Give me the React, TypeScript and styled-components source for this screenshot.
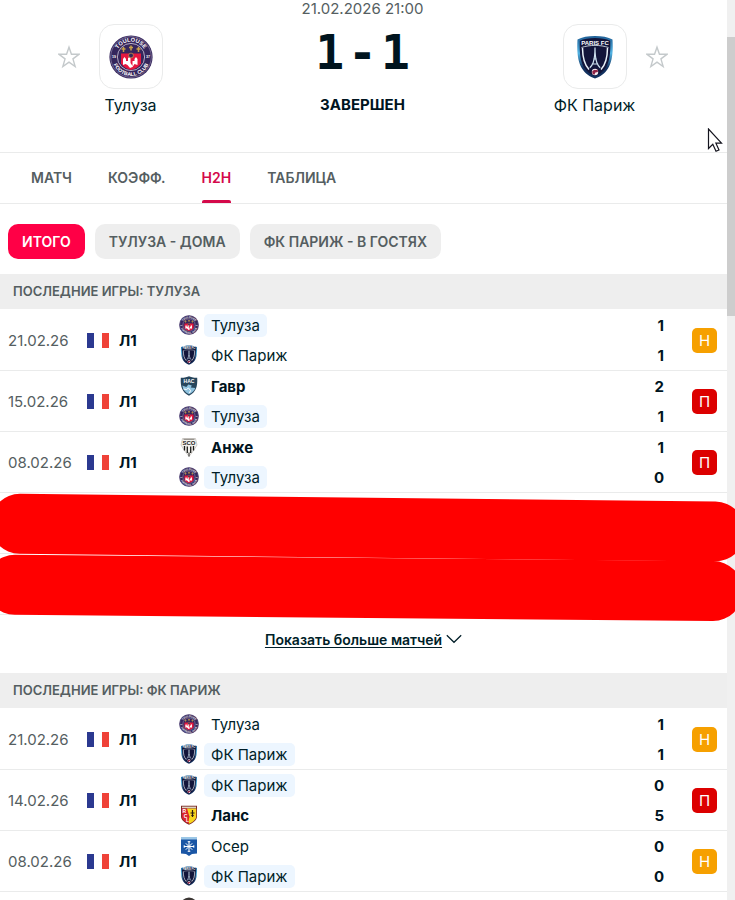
import { useId, useState } from "react";
import styled, { createGlobalStyle, css } from "styled-components";

const colors = {
  text: "#001e28",
  strong: "#00141e",
  muted: "#555e61",
  line: "#eaebeb",
  panel: "#eeeeee",
  brand: "#ff0046",
  active: "#d4094a",
  highlight: "#edf6ff",
  draw: "#f6a000",
  loss: "#dc0000",
};

const GlobalStyle = createGlobalStyle`
  * {
    box-sizing: border-box;
  }
  body {
    margin: 0;
    background: #fff;
    color: ${colors.text};
    font-family: Inter, "Liberation Sans", sans-serif;
  }
  button {
    font-family: inherit;
    border: 0;
    padding: 0;
    background: none;
    cursor: pointer;
  }
`;

const Page = styled.div`
  position: relative;
  display: flex;
  height: 100vh;
  overflow: hidden;
`;

const Main = styled.main`
  flex: 1;
  min-width: 0;
`;

const ScrollTrack = styled.div`
  flex: none;
  width: 8px;
  background: #f0f0f0;
`;

const ScrollThumb = styled.div`
  height: 31%;
  margin-top: 37px;
  background: #cdcdcd;
`;

const Duel = styled.header`
  display: grid;
  grid-template-columns: repeat(3, 32%);
  justify-content: center;
  height: 153px;
  padding-right: 2px;
  border-bottom: 1px solid ${colors.line};
`;

const Participant = styled.div`
  display: grid;
  grid-template-columns: 1fr 64px 1fr;
  grid-template-rows: 65px 32px;
  align-items: center;
  padding-top: 24px;
  align-content: start;
`;

const CrestFrame = styled.div`
  grid-column: 2;
  grid-row: 1;
  display: flex;
  align-items: center;
  justify-content: center;
  height: 65px;
  border: 1px solid ${colors.line};
  border-radius: 15px;
`;

const Favorite = styled.button<{ $side: "left" | "right" }>`
  grid-row: 1;
  grid-column: ${({ $side }) => ($side === "left" ? 1 : 3)};
  justify-self: ${({ $side }) => ($side === "left" ? "end" : "start")};
  margin: 0 19px;
  height: 24px;
`;

const ParticipantName = styled.a`
  grid-column: 1 / -1;
  text-align: center;
  font-size: 16px;
  line-height: 32px;
  color: inherit;
  text-decoration: none;
`;

const DuelCenter = styled.div`
  display: flex;
  flex-direction: column;
  align-items: center;
`;

const StartTime = styled.div`
  font-size: 15px;
  line-height: 18px;
  color: ${colors.muted};
`;

const Score = styled.div`
  display: flex;
  gap: 4px;
  margin-top: 6px;
  font-family: "DejaVu Sans Mono", monospace;
  font-size: 48px;
  font-weight: 700;
  line-height: 56px;
  color: ${colors.strong};
`;

const Status = styled.div`
  margin-top: 15px;
  font-size: 15px;
  font-weight: 700;
  line-height: 20px;
  color: ${colors.strong};
`;

const Tabs = styled.nav`
  display: flex;
  gap: 36px;
  height: 51px;
  padding: 0 31px;
  border-bottom: 1px solid ${colors.line};
`;

const Tab = styled.a<{ $active: boolean }>`
  display: flex;
  align-items: center;
  border-top: 3px solid transparent;
  font-size: 14px;
  font-weight: 600;
  line-height: 20px;
  color: ${colors.muted};
  text-decoration: none;
  position: relative;
  padding-bottom: 3px;

  ${({ $active }) =>
    $active &&
    css`
      color: ${colors.active};

      &::after {
        content: "";
        position: absolute;
        left: 0;
        right: 0;
        bottom: 0;
        height: 3px;
        border-radius: 2px 2px 0 0;
        background: ${colors.active};
      }
    `}
`;

const Filters = styled.div`
  display: flex;
  gap: 10px;
  padding: 20px 8px 15px;
`;

const Filter = styled.button<{ $active: boolean }>`
  height: 35px;
  padding: 0 14px;
  border-radius: 10px;
  font-size: 14px;
  font-weight: 600;
  white-space: nowrap;
  color: ${({ $active }) => ($active ? "#fff" : colors.muted)};
  background: ${({ $active }) => ($active ? colors.brand : colors.panel)};
`;

const Section = styled.section`
  position: relative;
`;

const SectionTitle = styled.h2`
  margin: 0 0 1px;
  padding: 0 13px;
  font-size: 13px;
  font-weight: 600;
  line-height: 35px;
  color: ${colors.muted};
  background: ${colors.panel};
`;

const MatchTable = styled.table`
  width: 100%;
  table-layout: fixed;
  border-spacing: 0;

  td {
    height: 61px;
    padding: 0;
    border-bottom: 1px solid ${colors.line};
  }
`;

const DateCell = styled.td`
  width: 87px;
  font-size: 15px;
  color: ${colors.muted};

  && {
    padding-left: 8px;
  }
`;

const LeagueCell = styled.td`
  width: 92px;
`;

const League = styled.div`
  display: flex;
  align-items: center;
  gap: 10px;
  font-size: 15px;
  font-weight: 700;
  color: ${colors.strong};
`;

const ScoreCell = styled.td`
  width: 60px;
`;

const BadgeCell = styled.td`
  width: 35px;
`;

const TeamLine = styled.div`
  display: flex;
  align-items: center;
  gap: 5px;
  height: 30px;
`;

const TeamName = styled.span<{ $highlight?: boolean; $winner?: boolean }>`
  padding: 0 7px;
  border-radius: 5px;
  font-size: 15px;
  line-height: 23px;
  font-weight: ${({ $winner }) => ($winner ? 700 : 400)};
  color: ${({ $winner }) => ($winner ? colors.strong : colors.text)};
  background: ${({ $highlight }) =>
    $highlight ? colors.highlight : "transparent"};
`;

const Goals = styled.div`
  display: flex;
  align-items: center;
  justify-content: flex-end;
  height: 30px;
  padding-right: 28px;
  font-size: 15px;
  font-weight: 700;
  line-height: 23px;
  color: ${colors.strong};
`;

const Badge = styled.span<{ $loss: boolean }>`
  display: block;
  width: 25px;
  border-radius: 5px;
  text-align: center;
  font-size: 15px;
  line-height: 25px;
  color: #fff;
  background: ${({ $loss }) => ($loss ? colors.loss : colors.draw)};
`;

const MoreBar = styled.div`
  display: flex;
  justify-content: center;
  height: 58px;
  padding-bottom: 10px;
`;

const MoreButton = styled.button`
  display: flex;
  align-items: center;
  gap: 4px;
  font-size: 14px;
  font-weight: 600;
  color: ${colors.text};

  span {
    text-decoration: underline;
    text-underline-offset: 2px;
  }
`;

// Spills over the scroll track, so it is wider than the list below it
const Marker = styled.svg`
  position: absolute;
  left: 0;
  top: 218px;
  z-index: 1;
  width: calc(100% + 8px);
  height: 132px;
`;

const Pointer = styled.svg`
  position: absolute;
  right: 12px;
  top: 128px;
`;

type CrestProps = { size: number };

const ToulouseCrest = ({ size }: CrestProps) => {
  const id = useId();
  return (
    <svg width={size} height={size} viewBox="0 0 44 44" aria-hidden="true">
      <circle cx="22" cy="22" r="21.6" fill="#35265c" />
      <circle cx="22" cy="22" r="20.3" fill="none" stroke="#8d83a6" strokeWidth=".7" />
      <circle cx="22" cy="22" r="13.6" fill="#35265c" stroke="#b3abc4" strokeWidth="1" />
      <path id={`${id}t`} d="M6.7 22a15.3 15.3 0 0 1 30.6 0" fill="none" />
      <path id={`${id}b`} d="M3 22a19 19 0 0 0 38 0" fill="none" />
      <g
        fill="#fff"
        fontFamily="Liberation Sans, sans-serif"
        fontWeight="700"
        fontSize="5.6"
        textAnchor="middle"
      >
        <text>
          <textPath href={`#${id}t`} startOffset="50%">TOULOUSE</textPath>
        </text>
        <text fontSize="5.2">
          <textPath href={`#${id}b`} startOffset="50%">FOOTBALL CLUB</textPath>
        </text>
        <text x="4.9" y="23.4" fontSize="3.6">19</text>
        <text x="39.1" y="23.4" fontSize="3.6">37</text>
      </g>
      <path
        d="M14.500 12v5M12.500 14h4M22 10.500v5M20 12.500h4M29.500 12v5M27.500 14h4"
        stroke="#c9a24a"
        strokeWidth="1.500"
      />
      <path d="M12 18.500h20v10c-2 3.500-6 5.500-10 6.500-4-1-8-3-10-6.500z" fill="#e5173f" />
      <path
        d="M14 30v-6l1.500-2 1.500 2v2h2v-3l1.500-1 1 1v5l2 3v-5h2v-2l1.500-2 1.500 2v6l-3-1-2 3-2.500 1-2.500-3-2-1z"
        fill="#fff"
      />
      <circle cx="22" cy="20.500" r="2.400" fill="#35265c" stroke="#c9a24a" strokeWidth=".7" />
    </svg>
  );
};

const ParisCrest = ({ size }: CrestProps) => {
  const id = useId();
  return (
    <svg width={size} height={size} viewBox="0 0 44 44" aria-hidden="true">
      <linearGradient id={id} x1="0" y1="0" x2="0" y2="1">
        <stop offset="0" stopColor="#1f5f96" />
        <stop offset=".4" stopColor="#52b4e4" />
        <stop offset=".75" stopColor="#12315f" />
      </linearGradient>
      <path
        d="M4.500 4.500C13-.1 31-.1 39.500 4.500c.8 13-.5 22.500-4.500 29-3 5-8 8.500-13 10-5-1.500-10-5-13-10C5 27 3.700 17.500 4.500 4.500z"
        fill={`url(#${id})`}
      />
      <path
        d="M6.800 5.800C14 2 30 2 37.200 5.800c.6 12-.7 20.500-4.200 26.500-2.600 4.500-6.800 7.500-11 9-4.200-1.500-8.400-4.500-11-9C7.500 26.300 6.200 17.800 6.800 5.800z"
        fill="#12153a"
      />
      <path
        d="M9.500 13c.1 9.500 1.800 16.500 6.500 21.500M34.500 13c-.1 9.500-1.800 16.500-6.500 21.500"
        fill="none"
        stroke="#e8f1f8"
        strokeWidth="1.500"
      />
      <path d="M8.500 12.500c8-2.800 19-2.800 27 0" fill="none" stroke="#e8f1f8" strokeWidth=".8" />
      <text
        x="22"
        y="9.600"
        fill="#fff"
        fontFamily="Liberation Sans, sans-serif"
        fontWeight="700"
        fontSize="6"
        textAnchor="middle"
      >
        PARIS FC
      </text>
      <path
        d="M22 12.500c0 7-.6 11.500-1.800 15-.8 2.200-2 4-3.400 5.200M22 12.500c0 7 .6 11.500 1.800 15 .8 2.200 2 4 3.400 5.200M20.300 24h3.400M18.800 29h6.400"
        fill="none"
        stroke="#cfe3f1"
        strokeWidth="1.200"
      />
      <circle cx="22" cy="37" r="3.200" fill="#f3e9ee" />
      <path d="M19.200 36.500c2-2.500 3.500-1 5.500-2l.2 2.500-2.500.5-1 2.300-1.800-.8z" fill="#8f2346" />
    </svg>
  );
};

const HavreCrest = ({ size }: CrestProps) => (
  <svg width={size} height={size} viewBox="0 0 20 20" aria-hidden="true">
    <path d="M1.800 1.800C6 1.800 8.500 1 10 .2c1.500.8 4 1.600 8.200 1.600.5 9-1.200 14.400-8.200 18-7-3.600-8.700-9-8.200-18z" fill="#27465c" />
    <path d="M3.300 9.500l4 1.500 2-2.500 3.500 1-1 2 4.500.5c-1 3-2.800 4.500-6.300 6.300-3.800-2-6-4.300-6.700-8.800z" fill="#8fc3df" />
    <path d="M4.500 13l3 .5 2-1.500 2 2.500-1 2.500" fill="none" stroke="#fff" strokeWidth="1" />
    <text x="10" y="7.300" fill="#fff" fontFamily="Liberation Sans, sans-serif" fontWeight="700" fontSize="5" textAnchor="middle">
      HAC
    </text>
  </svg>
);

const AngersCrest = ({ size }: CrestProps) => (
  <svg width={size} height={size} viewBox="0 0 20 20" aria-hidden="true">
    <path d="M3.500 1.500h13l1.500 6.500-3 5-5 6.500-5-6.500-3-5z" fill="#f2f0ec" stroke="#b5b2ac" strokeWidth=".6" />
    <path d="M5.500 9v4.500M8.300 9.500v6.500M11.700 9.500v6.500M14.500 9v4.500" stroke="#1d1d1b" strokeWidth="1.300" />
    <path d="M10 15.500v4" stroke="#1d1d1b" strokeWidth="1" />
    <path d="M4.500 2.300h11" stroke="#77736c" strokeWidth=".9" />
    <text x="10" y="8.300" fill="#1d1d1b" fontFamily="Liberation Sans, sans-serif" fontWeight="700" fontSize="6" textAnchor="middle">
      SCO
    </text>
  </svg>
);

const LensCrest = ({ size }: CrestProps) => (
  <svg width={size} height={size} viewBox="0 0 20 20" aria-hidden="true">
    <path d="M2 .8h16v10.700c0 3.700-4 6.500-8 8.200-4-1.700-8-4.500-8-8.200z" fill="#7b2a24" />
    <path d="M2.800 3.500H10V18.800c-3.500-1.500-7.200-4-7.200-7.300z" fill="#d9212b" />
    <path d="M8 3.500h9.200v8c0 3.300-3.700 5.800-7.200 7.300-.5-3-.2-5 .5-7z" fill="#f7d51d" />
    <path d="M3 1.600h14v1.600H3z" fill="#dcd3c4" />
    <path d="M13.500 5v7M11.500 8h4M12.300 10.500h2.400" stroke="#2a1a12" strokeWidth="1.200" />
    <g fill="#fff" fontFamily="Liberation Sans, sans-serif" fontWeight="700" fontSize="5">
      <text x="3.600" y="8.200">R</text>
      <text x="4.800" y="12.500">C</text>
      <text x="7" y="16.800">L</text>
    </g>
  </svg>
);

const AuxerreCrest = ({ size }: CrestProps) => (
  <svg width={size} height={size} viewBox="0 0 20 20" aria-hidden="true">
    <path d="M2 1h16v16.500l-5 .5-3 2-3-2-5-.5z" fill="#1a56a5" />
    <path d="M2 1h16v2.500H2z" fill="#9cc7e6" />
    <path
      d="M10 5.500v10M5 10.500h10M6.800 7.300l6.400 6.400M13.200 7.300l-6.400 6.400M8.700 5.700h2.600M8.700 15.300h2.600M5.200 9.200v2.600M14.800 9.200v2.600"
      stroke="#fff"
      strokeWidth="1"
    />
  </svg>
);

const NantesCrest = ({ size }: CrestProps) => (
  <svg width={size} height={size} viewBox="0 0 20 20" aria-hidden="true">
    <circle cx="10" cy="9.500" r="9" fill="#3b3634" />
    <path d="M3 5.500C7 2 13 2 17 5.500v4H3z" fill="#d8d3cf" />
  </svg>
);

const FranceFlag = () => (
  <svg width="22" height="15" viewBox="0 0 22 15" role="img" aria-label="Франция">
    <path d="M0 0h22v15H0z" fill="#fff" />
    <path d="M0 0h7v15H0z" fill="#2b3990" />
    <path d="M15 0h7v15h-7z" fill="#ef4238" />
  </svg>
);

const Star = () => (
  <svg width="22" height="24" viewBox="0 0 22 24" fill="none" stroke="#c4c9cb" strokeWidth="1.400">
    <path d="M11 2.200l2.450 7.100h7.500l-6 4.550 2.200 7.750L11 17.100l-6.150 4.500 2.200-7.750-6-4.550h7.500z" />
  </svg>
);

const crests = {
  "Тулуза": ToulouseCrest,
  "ФК Париж": ParisCrest,
  "Гавр": HavreCrest,
  "Анже": AngersCrest,
  "Ланс": LensCrest,
  "Осер": AuxerreCrest,
};

type Team = keyof typeof crests;

interface Match {
  date: string;
  teams: [Team, Team];
  goals: [number, number];
}

const toulouseMatches: Match[] = [
  { date: "21.02.26", teams: ["Тулуза", "ФК Париж"], goals: [1, 1] },
  { date: "15.02.26", teams: ["Гавр", "Тулуза"], goals: [2, 1] },
  { date: "08.02.26", teams: ["Анже", "Тулуза"], goals: [1, 0] },
];

const parisMatches: Match[] = [
  { date: "21.02.26", teams: ["Тулуза", "ФК Париж"], goals: [1, 1] },
  { date: "14.02.26", teams: ["ФК Париж", "Ланс"], goals: [0, 5] },
  { date: "08.02.26", teams: ["Осер", "ФК Париж"], goals: [0, 0] },
];

const MatchRow = ({ match, team }: { match: Match; team: Team }) => {
  const { date, teams, goals } = match;
  const isDraw = goals[0] === goals[1];

  return (
    <tr>
      <DateCell>{date}</DateCell>
      <LeagueCell>
        <League>
          <FranceFlag />
          Л1
        </League>
      </LeagueCell>
      <td>
        {teams.map((name, i) => {
          const Crest = crests[name];
          return (
            <TeamLine key={name}>
              <Crest size={20} />
              <TeamName
                $highlight={name === team}
                $winner={goals[i] > goals[1 - i]}
              >
                {name}
              </TeamName>
            </TeamLine>
          );
        })}
      </td>
      <ScoreCell>
        <Goals>{goals[0]}</Goals>
        <Goals>{goals[1]}</Goals>
      </ScoreCell>
      <BadgeCell>
        <Badge $loss={!isDraw}>{isDraw ? "Н" : "П"}</Badge>
      </BadgeCell>
    </tr>
  );
};

const tabs = ["МАТЧ", "КОЭФФ.", "H2H", "ТАБЛИЦА"];
const filters = ["ИТОГО", "ТУЛУЗА - ДОМА", "ФК ПАРИЖ - В ГОСТЯХ"];

const App: React.FC = () => {
  const [tab, setTab] = useState("H2H");
  const [filter, setFilter] = useState("ИТОГО");

  return (
    <Page>
      <GlobalStyle />
      <Main>
        <Duel>
          <Participant>
            <Favorite $side="left" aria-label="Добавить Тулуза в избранное">
              <Star />
            </Favorite>
            <CrestFrame>
              <ToulouseCrest size={44} />
            </CrestFrame>
            <ParticipantName href="#toulouse">Тулуза</ParticipantName>
          </Participant>
          <DuelCenter>
            <StartTime>21.02.2026 21:00</StartTime>
            <Score>
              <span>1</span>
              <span>-</span>
              <span>1</span>
            </Score>
            <Status>ЗАВЕРШЕН</Status>
          </DuelCenter>
          <Participant>
            <CrestFrame>
              <ParisCrest size={44} />
            </CrestFrame>
            <Favorite $side="right" aria-label="Добавить ФК Париж в избранное">
              <Star />
            </Favorite>
            <ParticipantName href="#paris">ФК Париж</ParticipantName>
          </Participant>
        </Duel>

        <Tabs>
          {tabs.map((name) => (
            <Tab
              key={name}
              href={`#${name}`}
              $active={name === tab}
              onClick={() => setTab(name)}
            >
              {name}
            </Tab>
          ))}
        </Tabs>

        <Filters>
          {filters.map((name) => (
            <Filter
              key={name}
              $active={name === filter}
              onClick={() => setFilter(name)}
            >
              {name}
            </Filter>
          ))}
        </Filters>

        <Section>
          <SectionTitle>ПОСЛЕДНИЕ ИГРЫ: ТУЛУЗА</SectionTitle>
          <MatchTable>
            <tbody>
              {toulouseMatches.map((match) => (
                <MatchRow key={match.date} match={match} team="Тулуза" />
              ))}
              <tr>
                <td colSpan={5} />
              </tr>
              <tr>
                <td colSpan={5} />
              </tr>
            </tbody>
          </MatchTable>
          <Marker stroke="#ff0000" strokeWidth="60" strokeLinecap="round" aria-hidden="true">
            <line x1="20" y1="31.800" x2="97.300%" y2="39.500" />
            <line x1="15" y1="92.800" x2="97%" y2="99" />
          </Marker>
          <MoreBar>
            <MoreButton>
              <span>Показать больше матчей</span>
              <svg width="16" height="10" viewBox="0 0 16 10" fill="none" stroke={colors.text} strokeWidth="1.200">
                <path d="M.8 1.300L8 8.300l7.200-7" />
              </svg>
            </MoreButton>
          </MoreBar>
        </Section>

        <Section>
          <SectionTitle>ПОСЛЕДНИЕ ИГРЫ: ФК ПАРИЖ</SectionTitle>
          <MatchTable>
            <tbody>
              {parisMatches.map((match) => (
                <MatchRow key={match.date} match={match} team="ФК Париж" />
              ))}
              <tr>
                <DateCell />
                <LeagueCell />
                <td>
                  <TeamLine>
                    <NantesCrest size={20} />
                  </TeamLine>
                  <TeamLine />
                </td>
                <ScoreCell />
                <BadgeCell />
              </tr>
            </tbody>
          </MatchTable>
        </Section>
      </Main>
      <ScrollTrack>
        <ScrollThumb />
      </ScrollTrack>
      <Pointer width="16" height="25" viewBox="0 0 16 25" aria-hidden="true">
        <path
          d="M1.500 1v19.500l4.300-4.200 3.200 7 3-1.300-3.100-6.800h5.600z"
          fill="#fff"
          stroke="#14141e"
          strokeWidth="1.200"
        />
      </Pointer>
    </Page>
  );
};

export default App;
